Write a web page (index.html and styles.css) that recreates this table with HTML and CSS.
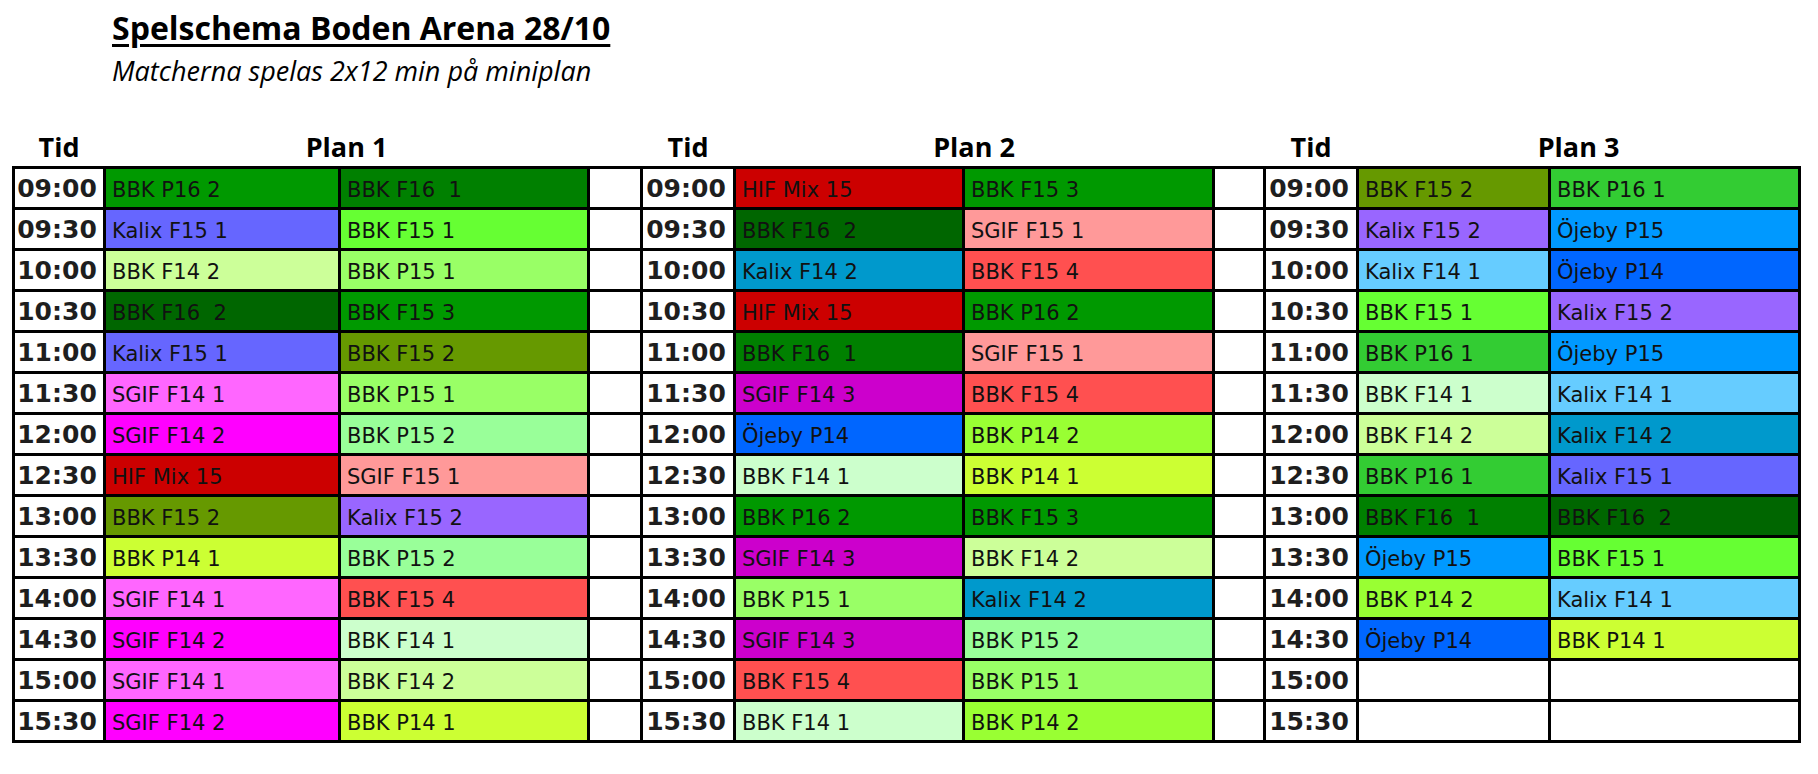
FILE: index.html
```html
<!DOCTYPE html>
<html lang="sv">
<head>
<meta charset="utf-8">
<title>Spelschema Boden Arena 28/10</title>
<link rel="stylesheet" href="styles.css">
</head>
<body>
<div class="page">
  <header class="intro">
    <h1 class="title">Spelschema Boden Arena 28/10</h1>
    <p class="subtitle">Matcherna spelas 2x12 min på miniplan</p>
  </header>

  <div class="heads">
    <div class="h tid">Tid</div><div class="h plan">Plan 1</div><div class="h gap"></div>
    <div class="h tid">Tid</div><div class="h plan">Plan 2</div><div class="h gap"></div>
    <div class="h tid">Tid</div><div class="h plan">Plan 3</div>
  </div>

  <div class="sheet">
    <div class="t">09:00</div><div class="c gr">BBK P16 2</div><div class="c mg">BBK F16&nbsp; 1</div><div class="s"></div>
    <div class="t">09:00</div><div class="c hif">HIF Mix 15</div><div class="c gr">BBK F15 3</div><div class="s"></div>
    <div class="t">09:00</div><div class="c ol">BBK F15 2</div><div class="c lg">BBK P16 1</div>

    <div class="t">09:30</div><div class="c k151">Kalix F15 1</div><div class="c lime">BBK F15 1</div><div class="s"></div>
    <div class="t">09:30</div><div class="c dg">BBK F16&nbsp; 2</div><div class="c sg151">SGIF F15 1</div><div class="s"></div>
    <div class="t">09:30</div><div class="c k152">Kalix F15 2</div><div class="c oj15">Öjeby P15</div>

    <div class="t">10:00</div><div class="c f142">BBK F14 2</div><div class="c p151">BBK P15 1</div><div class="s"></div>
    <div class="t">10:00</div><div class="c k142">Kalix F14 2</div><div class="c f154">BBK F15 4</div><div class="s"></div>
    <div class="t">10:00</div><div class="c k141">Kalix F14 1</div><div class="c oj14">Öjeby P14</div>

    <div class="t">10:30</div><div class="c dg">BBK F16&nbsp; 2</div><div class="c gr">BBK F15 3</div><div class="s"></div>
    <div class="t">10:30</div><div class="c hif">HIF Mix 15</div><div class="c gr">BBK P16 2</div><div class="s"></div>
    <div class="t">10:30</div><div class="c lime">BBK F15 1</div><div class="c k152">Kalix F15 2</div>

    <div class="t">11:00</div><div class="c k151">Kalix F15 1</div><div class="c ol">BBK F15 2</div><div class="s"></div>
    <div class="t">11:00</div><div class="c mg">BBK F16&nbsp; 1</div><div class="c sg151">SGIF F15 1</div><div class="s"></div>
    <div class="t">11:00</div><div class="c lg">BBK P16 1</div><div class="c oj15">Öjeby P15</div>

    <div class="t">11:30</div><div class="c sg141">SGIF F14 1</div><div class="c p151">BBK P15 1</div><div class="s"></div>
    <div class="t">11:30</div><div class="c sg143">SGIF F14 3</div><div class="c f154">BBK F15 4</div><div class="s"></div>
    <div class="t">11:30</div><div class="c f141">BBK F14 1</div><div class="c k141">Kalix F14 1</div>

    <div class="t">12:00</div><div class="c sg142">SGIF F14 2</div><div class="c p152">BBK P15 2</div><div class="s"></div>
    <div class="t">12:00</div><div class="c oj14">Öjeby P14</div><div class="c p142">BBK P14 2</div><div class="s"></div>
    <div class="t">12:00</div><div class="c f142">BBK F14 2</div><div class="c k142">Kalix F14 2</div>

    <div class="t">12:30</div><div class="c hif">HIF Mix 15</div><div class="c sg151">SGIF F15 1</div><div class="s"></div>
    <div class="t">12:30</div><div class="c f141">BBK F14 1</div><div class="c p141">BBK P14 1</div><div class="s"></div>
    <div class="t">12:30</div><div class="c lg">BBK P16 1</div><div class="c k151">Kalix F15 1</div>

    <div class="t">13:00</div><div class="c ol">BBK F15 2</div><div class="c k152">Kalix F15 2</div><div class="s"></div>
    <div class="t">13:00</div><div class="c gr">BBK P16 2</div><div class="c gr">BBK F15 3</div><div class="s"></div>
    <div class="t">13:00</div><div class="c mg">BBK F16&nbsp; 1</div><div class="c dg">BBK F16&nbsp; 2</div>

    <div class="t">13:30</div><div class="c p141">BBK P14 1</div><div class="c p152">BBK P15 2</div><div class="s"></div>
    <div class="t">13:30</div><div class="c sg143">SGIF F14 3</div><div class="c f142">BBK F14 2</div><div class="s"></div>
    <div class="t">13:30</div><div class="c oj15">Öjeby P15</div><div class="c lime">BBK F15 1</div>

    <div class="t">14:00</div><div class="c sg141">SGIF F14 1</div><div class="c f154">BBK F15 4</div><div class="s"></div>
    <div class="t">14:00</div><div class="c p151">BBK P15 1</div><div class="c k142">Kalix F14 2</div><div class="s"></div>
    <div class="t">14:00</div><div class="c p142">BBK P14 2</div><div class="c k141">Kalix F14 1</div>

    <div class="t">14:30</div><div class="c sg142">SGIF F14 2</div><div class="c f141">BBK F14 1</div><div class="s"></div>
    <div class="t">14:30</div><div class="c sg143">SGIF F14 3</div><div class="c p152">BBK P15 2</div><div class="s"></div>
    <div class="t">14:30</div><div class="c oj14">Öjeby P14</div><div class="c p141">BBK P14 1</div>

    <div class="t">15:00</div><div class="c sg141">SGIF F14 1</div><div class="c f142">BBK F14 2</div><div class="s"></div>
    <div class="t">15:00</div><div class="c f154">BBK F15 4</div><div class="c p151">BBK P15 1</div><div class="s"></div>
    <div class="t">15:00</div><div class="c"></div><div class="c"></div>

    <div class="t">15:30</div><div class="c sg142">SGIF F14 2</div><div class="c p141">BBK P14 1</div><div class="s"></div>
    <div class="t">15:30</div><div class="c f141">BBK F14 1</div><div class="c p142">BBK P14 2</div><div class="s"></div>
    <div class="t">15:30</div><div class="c"></div><div class="c"></div>
  </div>
</div>
</body>
</html>
```

FILE: styles.css
```css
* { box-sizing: border-box; }

html, body {
  margin: 0;
  padding: 0;
  background: #ffffff;
}

body {
  font-family: "Open Sans", "Noto Sans", sans-serif;
  color: #000;
}

.page {
  width: 1818px;
  height: 774px;
  padding: 0 0 0 12px;
  overflow: hidden;
}

.intro {
  padding-left: 100px;
  height: 130px;
}

.title {
  margin: 0;
  padding-top: 8px;
  font-size: 32px;
  line-height: 40px;
  font-weight: 700;
  text-decoration: underline;
  text-decoration-thickness: 3px;
  text-underline-offset: 4px;
}

.subtitle {
  margin: 0;
  padding-top: 8px;
  font-size: 27px;
  line-height: 30px;
  font-style: italic;
}

.heads,
.sheet {
  display: grid;
  grid-template-columns: 88px 232px 246px 50px 90px 226px 247px 48px 90px 189px 247px;
  column-gap: 3px;
  padding: 0 3px;
  width: 1789px;
}

.heads {
  height: 36px;
}

.h {
  font-weight: 700;
  font-size: 27px;
  line-height: 34px;
  text-align: center;
}

.h.plan {
  grid-column: span 2;
}

.sheet {
  background: #000;
  padding: 3px;
  row-gap: 3px;
  grid-auto-rows: 38px;
}

.t, .c, .s {
  background: #fff;
  display: flex;
  align-items: flex-end;
  padding-bottom: 4px;
}

.t {
  justify-content: center;
  font-family: "DejaVu Sans", sans-serif;
  font-weight: 700;
  font-size: 25px;
  line-height: 28px;
  color: #1e1e1e;
  padding-right: 4px;
}

.c {
  font-family: "DejaVu Sans", sans-serif;
  font-size: 21px;
  line-height: 26px;
  padding-left: 6px;
  color: #111;
  white-space: nowrap;
}

.dg { background: #006600; }
.mg { background: #008000; }
.gr { background: #009900; }
.lg { background: #33cc33; }
.ol { background: #669900; }
.lime { background: #66ff33; }
.p151 { background: #99ff66; }
.p152 { background: #99ff99; }
.p142 { background: #99ff33; }
.p141 { background: #ccff33; }
.f142 { background: #ccff99; }
.f141 { background: #ccffcc; }
.f154 { background: #ff5050; }
.hif { background: #cc0000; }
.sg151 { background: #ff9999; }
.sg141 { background: #ff66ff; }
.sg142 { background: #ff00ff; }
.sg143 { background: #cc00cc; }
.k151 { background: #6666ff; }
.k152 { background: #9966ff; }
.k141 { background: #66ccff; }
.k142 { background: #0099cc; }
.oj15 { background: #0099ff; }
.oj14 { background: #0066ff; }
```
